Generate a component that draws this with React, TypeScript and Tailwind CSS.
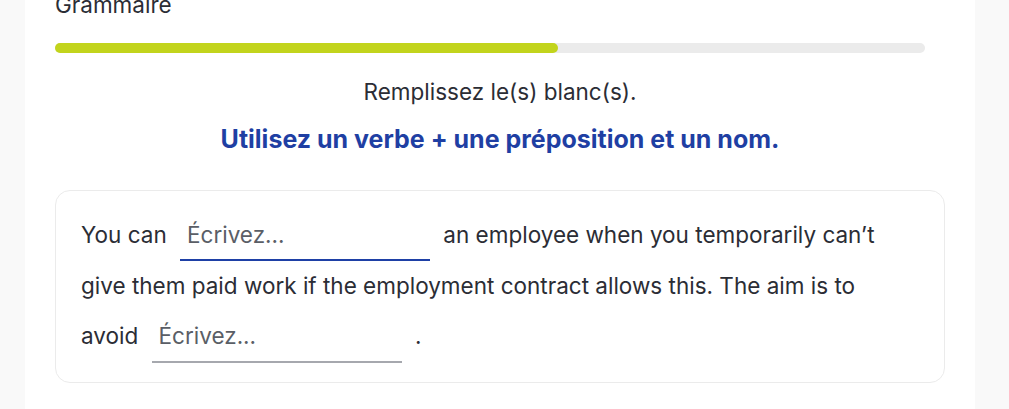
import React from 'react';

const BlankInput: React.FC<{ active?: boolean }> = ({ active = false }) => (
  <input
    type="text"
    placeholder="Écrivez..."
    className={
      'ml-[7px] mr-[7px] w-[250px] border-b-2 bg-transparent pl-[7px] pr-2 pt-0 pb-[8px] align-baseline text-[22.5px] leading-normal text-[#2b2d35] outline-none placeholder:text-[#5a5e66] ' +
      (active ? 'border-[#1e40a6]' : 'border-[#a6a8ae]')
    }
  />
);

export default function App() {
  return (
    <div className="flex h-[409px] w-full overflow-hidden bg-[#f9f9f9] font-['Inter',sans-serif]">
      <div className="ml-[25px] w-[950px] bg-white">
        <div className="px-[30px]">
          <div className="-mt-[10px] text-[22.5px] leading-[30px] text-[#2b2d35]">Grammaire</div>

          <div className="mt-[23px] h-[10px] w-[870px] rounded-full bg-[#ebebeb]">
            <div className="h-full w-[503px] rounded-full bg-[#c2d41c]" />
          </div>

          <p className="mt-[21px] text-center text-[22.5px] leading-[35px] text-[#2b2d35]">
            Remplissez le(s) blanc(s).
          </p>
          <p className="mt-[12px] text-center text-[25px] font-bold leading-[37.5px] text-[#1f3fa3]">
            Utilisez un verbe + une préposition et un nom.
          </p>

          <div className="mt-[31px] rounded-[15px] border border-[#ebebeb] pl-[25px] pr-[34px] pt-[19px] pb-[19px]">
            <p className="text-[22.5px] leading-[50px] text-[#2b2d35]">
              You can <BlankInput active /> an employee when you temporarily can’t give them paid work
              if the employment contract allows this. The aim is to avoid <BlankInput /> .
            </p>
          </div>
        </div>
      </div>
    </div>
  );
}
